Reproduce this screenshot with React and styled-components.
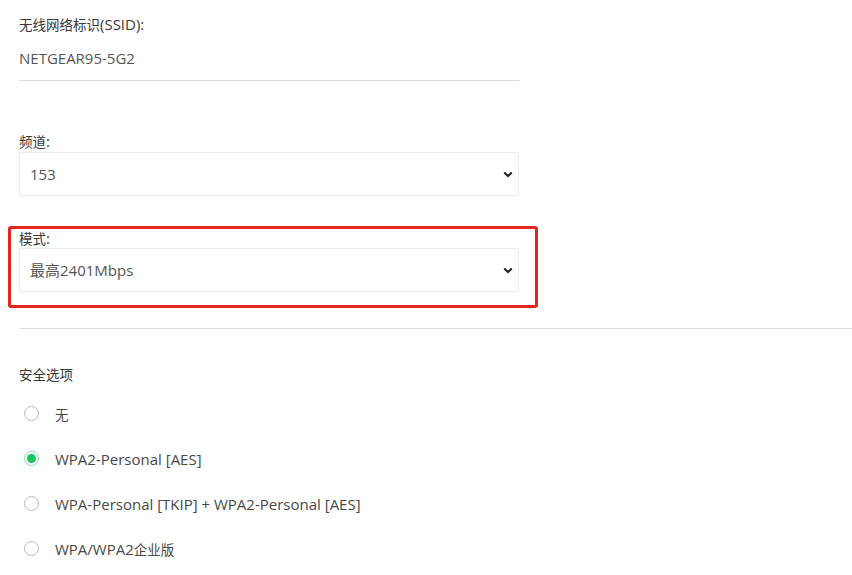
import React from 'react'
import styled, { createGlobalStyle } from 'styled-components'

const GlobalStyle = createGlobalStyle`
  body {
    margin: 0;
    background: #fff;
    font-family: "Open Sans", "Noto Sans CJK SC", sans-serif;
    color: #333;
  }
`

const Page = styled.div`
  padding: 14px 0 0 19px;
`

// Chinese runs are set a little smaller than the latin text around them
const Han = styled.span`
  font-family: "Noto Sans CJK SC", sans-serif;
  font-size: 13.5px;
`

const Field = styled.div`
  width: 500px;
  margin-top: ${props => props.top || 0}px;
`

const Label = styled.div`
  font-size: 15px;
  line-height: ${props => props.tight ? '18px' : '20px'};
  color: #383838;
`

const Value = styled.div`
  margin-top: 14px;
  padding-bottom: 12px;
  border-bottom: 1px solid #dcdcdc;
  font-size: 15px;
  line-height: 20px;
  color: #555;
`

const SelectWrap = styled.div`
  position: relative;
  margin-top: 1px;

  svg {
    position: absolute;
    right: 6px;
    top: 19px;
    pointer-events: none;
  }
`

const Select = styled.select`
  appearance: none;
  display: block;
  width: 100%;
  height: 44px;
  padding: 0 30px 0 10px;
  border: 1px solid #ececec;
  border-radius: 2px;
  background: #fff;
  font-family: "Open Sans", "Noto Sans CJK SC", sans-serif;
  font-size: 15px;
  color: #555;
  outline: none;
`

const Highlight = styled.div`
  width: 500px;
  margin: 30px 0 0 -11px;
  padding: 0 16px 13px 8px;
  border: 3px solid #e3261e;
  border-radius: 3px;
`

const Divider = styled.hr`
  margin: 20px 0 0;
  border: 0;
  border-top: 1px solid #dedede;
`

const Section = styled.div`
  margin-top: 35px;
  font-size: 15px;
  line-height: 20px;
  color: #383838;
`

const RadioList = styled.div`
  margin-top: 7px;
`

const RadioRow = styled.label`
  display: flex;
  align-items: center;
  height: 45px;
  font-size: 15px;
  color: #484848;
`

const Radio = styled.span`
  box-sizing: border-box;
  position: relative;
  flex: none;
  width: 15px;
  height: 15px;
  margin: 0 16px 0 5px;
  border-radius: 50%;
  border: 1px solid ${props => props.checked ? '#8fdfb0' : '#b9b9b9'};
  background: #fff;

  &::after {
    content: '';
    display: ${props => props.checked ? 'block' : 'none'};
    position: absolute;
    left: 2px;
    top: 2px;
    width: 9px;
    height: 9px;
    border-radius: 50%;
    background: #17c463;
  }
`

const Chevron = () => (
  <svg width="10" height="7" viewBox="0 0 10 7">
    <path d="M1.2 1.4 L5 5 L8.8 1.4" fill="none" stroke="#222" strokeWidth="2" />
  </svg>
)

const Dropdown = ({ value, options }) => (
  <SelectWrap>
    <Select defaultValue={value}>
      {options.map(o => <option key={o}>{o}</option>)}
    </Select>
    <Chevron />
  </SelectWrap>
)

const securityOptions = [
  { key: 'none', label: <Han>无</Han>, checked: false },
  { key: 'wpa2', label: 'WPA2-Personal [AES]', checked: true },
  { key: 'mixed', label: 'WPA-Personal [TKIP] + WPA2-Personal [AES]', checked: false },
  { key: 'ent', label: <>WPA/WPA2<Han>企业版</Han></>, checked: false },
]

export default function App() {
  return (
    <Page>
      <GlobalStyle />
      <Field>
        <Label><Han>无线网络标识</Han>(SSID):</Label>
        <Value>NETGEAR95-5G2</Value>
      </Field>

      <Field top={50}>
        <Label><Han>频道</Han>:</Label>
        <Dropdown value="153" options={['149', '153', '157', '161']} />
      </Field>

      <Highlight>
        <Label tight><Han>模式</Han>:</Label>
        <Dropdown value="最高2401Mbps" options={['最高2401Mbps', '最高1201Mbps']} />
      </Highlight>

      <Divider />

      <Section><Han>安全选项</Han></Section>
      <RadioList>
        {securityOptions.map(o => (
          <RadioRow key={o.key}>
            <Radio checked={o.checked} />
            {o.label}
          </RadioRow>
        ))}
      </RadioList>
    </Page>
  )
}
